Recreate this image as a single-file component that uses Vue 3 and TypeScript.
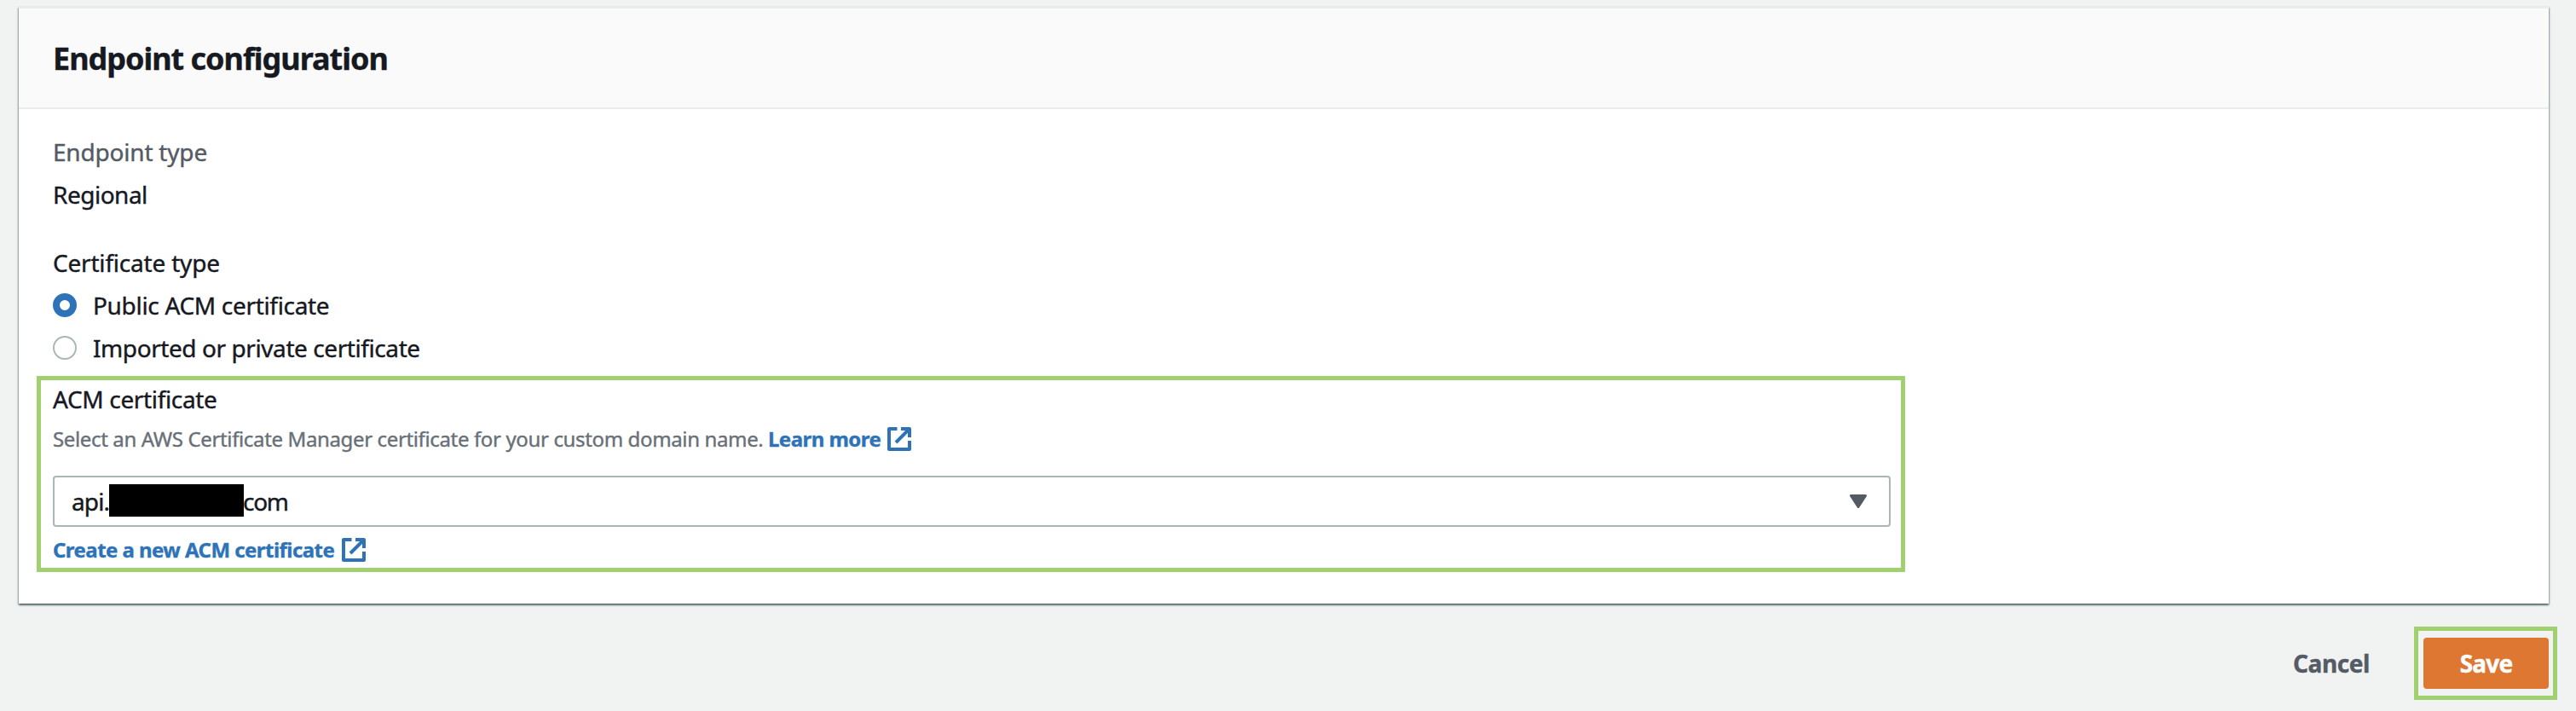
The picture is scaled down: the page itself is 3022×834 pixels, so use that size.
<script setup lang="ts">
import { ref } from 'vue'

interface CertificateOption {
  id: string
  label: string
}

const options: CertificateOption[] = [
  { id: 'public', label: 'Public ACM certificate' },
  { id: 'imported', label: 'Imported or private certificate' },
]
const selected = ref('public')
</script>

<template>
  <main class="page">
    <section class="card">
      <header class="card-header">
        <h2 class="title">Endpoint configuration</h2>
      </header>
      <div class="card-body">
        <div class="field">
          <div class="row muted">Endpoint type</div>
          <div class="row regional">Regional</div>
        </div>
        <div class="field">
          <div class="row">Certificate type</div>
          <div
            v-for="option in options"
            :key="option.id"
            class="row option"
            :class="option.id"
            role="radio"
            :aria-checked="selected === option.id"
            @click="selected = option.id"
          >
            <span class="radio" :class="{ checked: selected === option.id }"></span>
            <span>{{ option.label }}</span>
          </div>
        </div>
        <div class="highlight certificate">
          <div class="label">ACM certificate</div>
          <div class="hint">
            <span class="hint-text">Select an AWS Certificate Manager certificate for your custom domain name.</span>
            <a class="link learn">Learn more</a>
            <svg class="external" viewBox="0 0 28 28">
              <path d="M11.5 2H2V26H26V16M16 2H26V12M26 2L10 18" />
            </svg>
          </div>
          <div class="select">
            <span class="value"><span class="prefix">api.</span><span class="redacted"></span><span class="suffix">com</span></span>
            <svg class="caret" viewBox="0 0 20 16">
              <path d="M1.5 1.5H18.5L10 14.5Z" />
            </svg>
          </div>
          <div class="create">
            <a class="link create-link">Create a new ACM certificate</a>
            <svg class="external" viewBox="0 0 28 28">
              <path d="M11.5 2H2V26H26V16M16 2H26V12M26 2L10 18" />
            </svg>
          </div>
        </div>
      </div>
    </section>
    <footer class="actions">
      <button class="btn cancel">Cancel</button>
      <div class="highlight save-frame">
        <button class="btn save">Save</button>
      </div>
    </footer>
  </main>
</template>

<style>
body {
  margin: 0;
  background: #f1f3f3;
}
</style>

<style scoped>
.page {
  box-sizing: border-box;
  height: 834px;
  padding: 8px 22px 0;
  overflow: hidden;
  background: #f1f3f3;
  color: #16191f;
  font-family: "Noto Sans", "Open Sans", sans-serif;
  font-size: 28px;
  -webkit-text-stroke: 0.4px currentColor;
}
.card {
  box-sizing: border-box;
  width: 2968px;
  height: 700px;
  border-top: 2px solid #eaeded;
  background: #fff;
  box-shadow: 0 2px 2px 0 rgba(0, 28, 36, 0.5), 1px 1px 2px 0 rgba(0, 28, 36, 0.25), -1px 1px 2px 0 rgba(0, 28, 36, 0.25);
}
.card-header {
  padding: 37px 39px 35px 40px;
  border-bottom: 2px solid #eaeded;
  background: #fafafa;
}
.title {
  margin: 0;
  font-size: 36px;
  font-weight: 700;
  line-height: 44px;
  letter-spacing: -1.02px;
}
.card-body {
  padding-top: 25px;
}
.field {
  padding-left: 39px;
}
.field + .field {
  margin-top: 30px;
}
.row {
  padding-left: 1px;
  line-height: 50px;
  letter-spacing: -0.2px;
}
.muted {
  color: #545b64;
}
.regional {
  letter-spacing: -0.5px;
}
.option {
  display: flex;
  align-items: center;
  gap: 19px;
  letter-spacing: -0.32px;
}
.option.imported {
  letter-spacing: -0.42px;
}
.radio {
  box-sizing: border-box;
  width: 28px;
  height: 28px;
  border: 2px solid #aab7b8;
  border-radius: 50%;
  background: #fff;
}
.radio.checked {
  border: 8px solid #2e73b8;
}
.highlight {
  box-sizing: border-box;
  border: 5px solid #a1d06f;
}
.certificate {
  width: 2192px;
  height: 230px;
  margin: 8px 0 0 21px;
  padding: 0 12px 0 14px;
}
.label {
  line-height: 44px;
  letter-spacing: -0.35px;
}
.hint,
.create {
  display: flex;
  align-items: center;
  height: 40px;
  font-size: 24px;
  line-height: 40px;
}
.hint {
  margin-top: 5px;
  color: #687078;
}
.hint-text {
  width: 839px;
  white-space: nowrap;
  letter-spacing: -0.36px;
}
.link {
  color: #2e73b8;
  font-weight: 700;
  white-space: nowrap;
  letter-spacing: -0.55px;
}
.learn {
  width: 140px;
}
.create-link {
  width: 339px;
}
.external {
  width: 28px;
  height: 28px;
  fill: none;
  stroke: #2e73b8;
  stroke-width: 4;
  stroke-linejoin: round;
}
.select {
  box-sizing: border-box;
  display: flex;
  align-items: center;
  justify-content: space-between;
  height: 60px;
  margin-top: 23px;
  padding: 0 26px 0 20px;
  border: 2px solid #aab7b8;
  border-radius: 4px;
}
.value {
  display: flex;
  align-items: center;
  height: 56px;
}
.prefix {
  width: 44px;
  line-height: 60px;
  letter-spacing: -0.9px;
}
.redacted {
  width: 158px;
  height: 38px;
  margin-bottom: 2px;
  background: #000;
}
.suffix {
  margin-left: -1px;
  line-height: 60px;
  letter-spacing: -1.3px;
}
.caret {
  width: 20px;
  height: 16px;
  fill: #545b64;
  stroke: #545b64;
  stroke-width: 3;
  stroke-linejoin: round;
}
.create {
  margin-top: 7px;
}
.actions {
  display: flex;
  align-items: center;
  justify-content: flex-end;
  gap: 52px;
  margin-top: 27px;
}
.btn {
  height: 60px;
  padding: 0;
  border: 0;
  background: none;
  font: 700 28px/60px "Noto Sans", "Open Sans", sans-serif;
}
.cancel {
  color: #545b64;
  letter-spacing: -0.4px;
}
.save-frame {
  width: 168px;
  height: 86px;
  padding: 8px 5px 8px 6px;
}
.save {
  display: block;
  width: 147px;
  border-radius: 4px;
  background: #dd7732;
  color: #fff;
  letter-spacing: -0.8px;
}
</style>
